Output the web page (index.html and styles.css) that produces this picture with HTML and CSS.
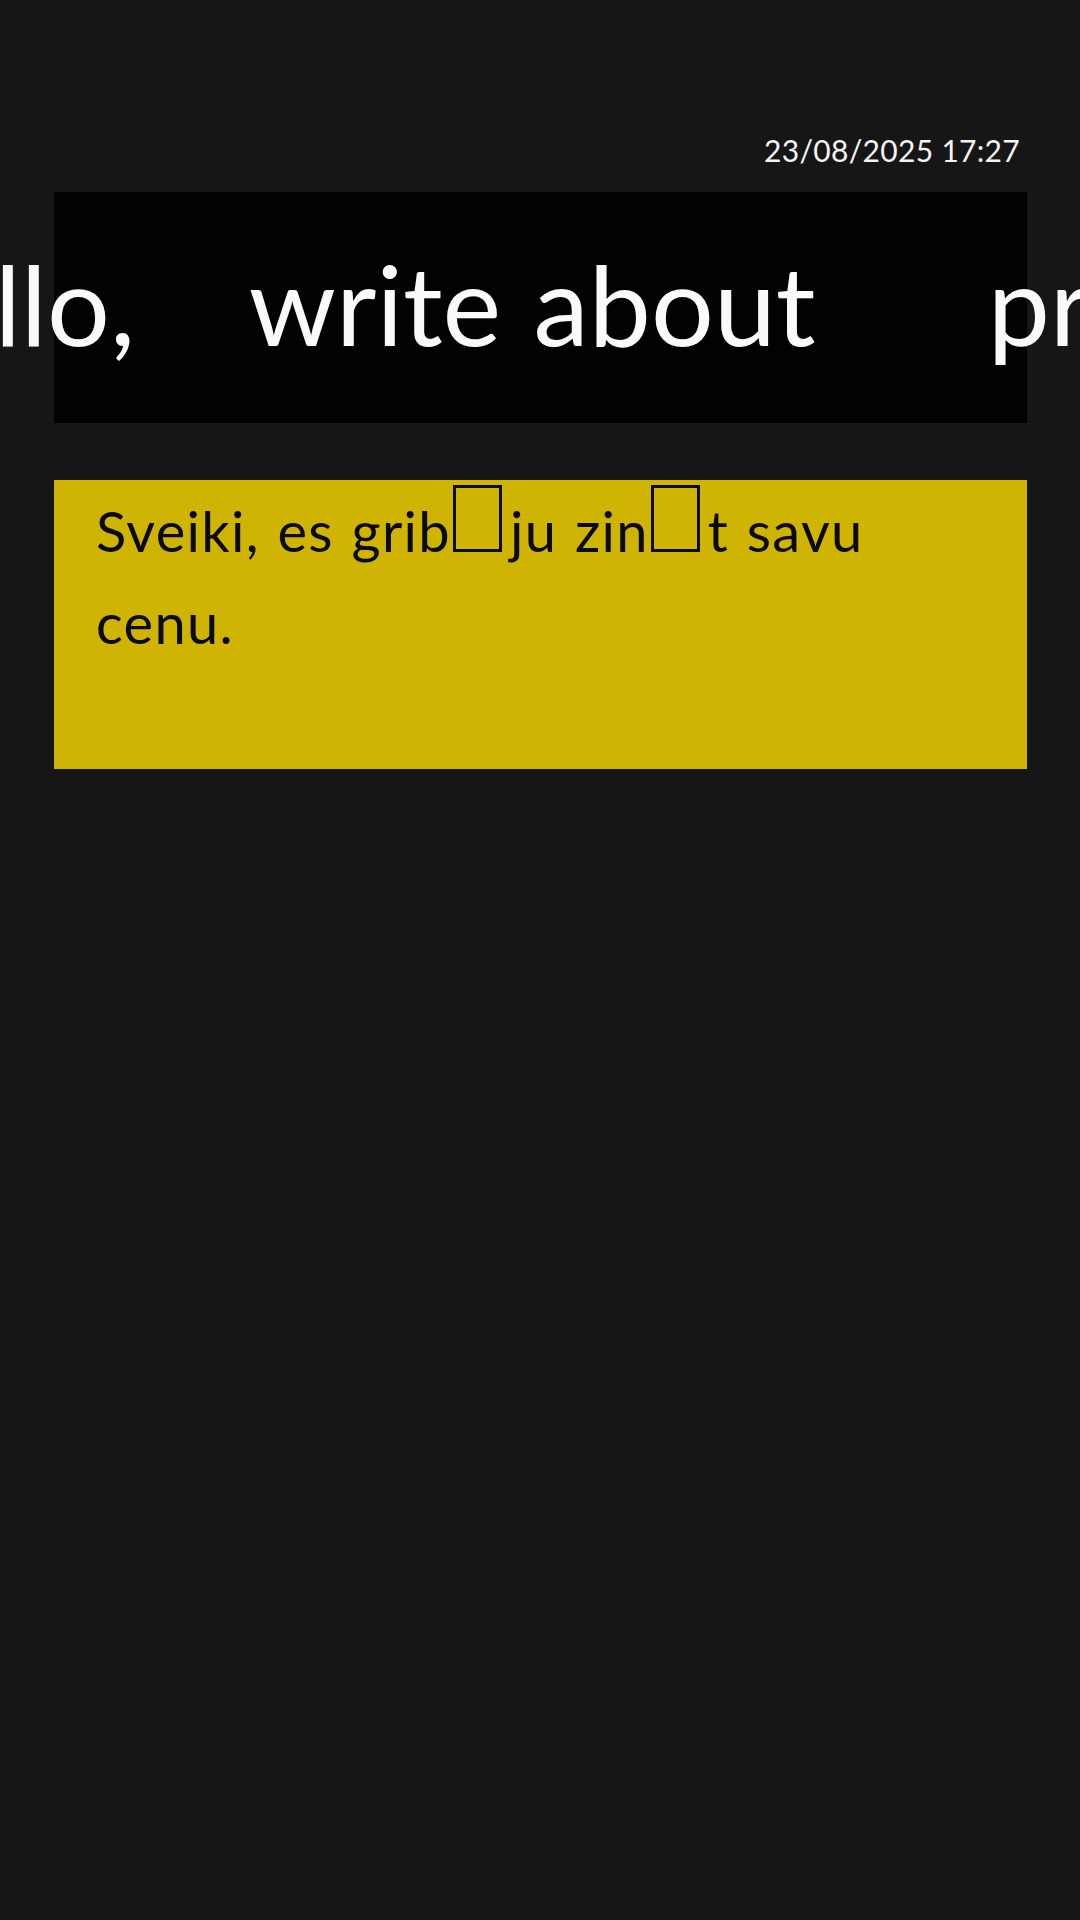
FILE: index.html
```html
<!DOCTYPE html>
<html>
<head>
<meta charset="utf-8">
<link rel="stylesheet" href="styles.css">
</head>
<body>
<div class="page">
  <div class="date-row"><span class="date">23/08/2025 17:27</span></div>
  <div class="headline-box">
    <div class="headline">Hello,<span class="gap-a">    </span>write about<span class="gap-b">     </span>price</div>
  </div>
  <div class="message-box">
    <p class="message">Sveiki, es grib<span class="tofu"></span>ju zin<span class="tofu"></span>t savu cenu.</p>
  </div>
</div>
</body>
</html>
```
FILE: styles.css
```css
html, body {
  margin: 0;
  padding: 0;
  background: #161616;
}
body {
  width: 1080px;
  height: 1920px;
  overflow: hidden;
  font-family: Lato, "Noto Sans", sans-serif;
}
.page {
  display: flex;
  flex-direction: column;
  padding: 132px 53px 0 54px;
}
.date-row {
  display: flex;
  justify-content: flex-end;
  padding-right: 7px;
  height: 36px;
}
.date {
  color: #f4f4f4;
  font-size: 30px;
  line-height: 36px;
  letter-spacing: 0.3px;
}
.headline-box {
  margin-top: 24px;
  height: 231px;
  background: #020202;
  overflow: visible;
}
.headline {
  color: #fafafa;
  font-size: 111px;
  line-height: 223px;
  white-space: pre;
  word-spacing: 4px;
  margin-left: -201px;
}
.gap-a {
  word-spacing: 0;
}
.gap-b {
  word-spacing: 6px;
}
.message-box {
  margin-top: 57px;
  height: 289px;
  background: #d0b403;
  padding: 5px 40px 0 42px;
  box-sizing: border-box;
}
.message {
  margin: 0;
  color: #0a0a0a;
  font-size: 56px;
  line-height: 92px;
  letter-spacing: 1.3px;
  word-spacing: 2px;
  max-width: 860px;
}
.tofu {
  display: inline-block;
  width: 43px;
  height: 61px;
  border: 3px solid #0a0a0a;
  margin: 0 8px 0 2px;
  vertical-align: baseline;
}
```
